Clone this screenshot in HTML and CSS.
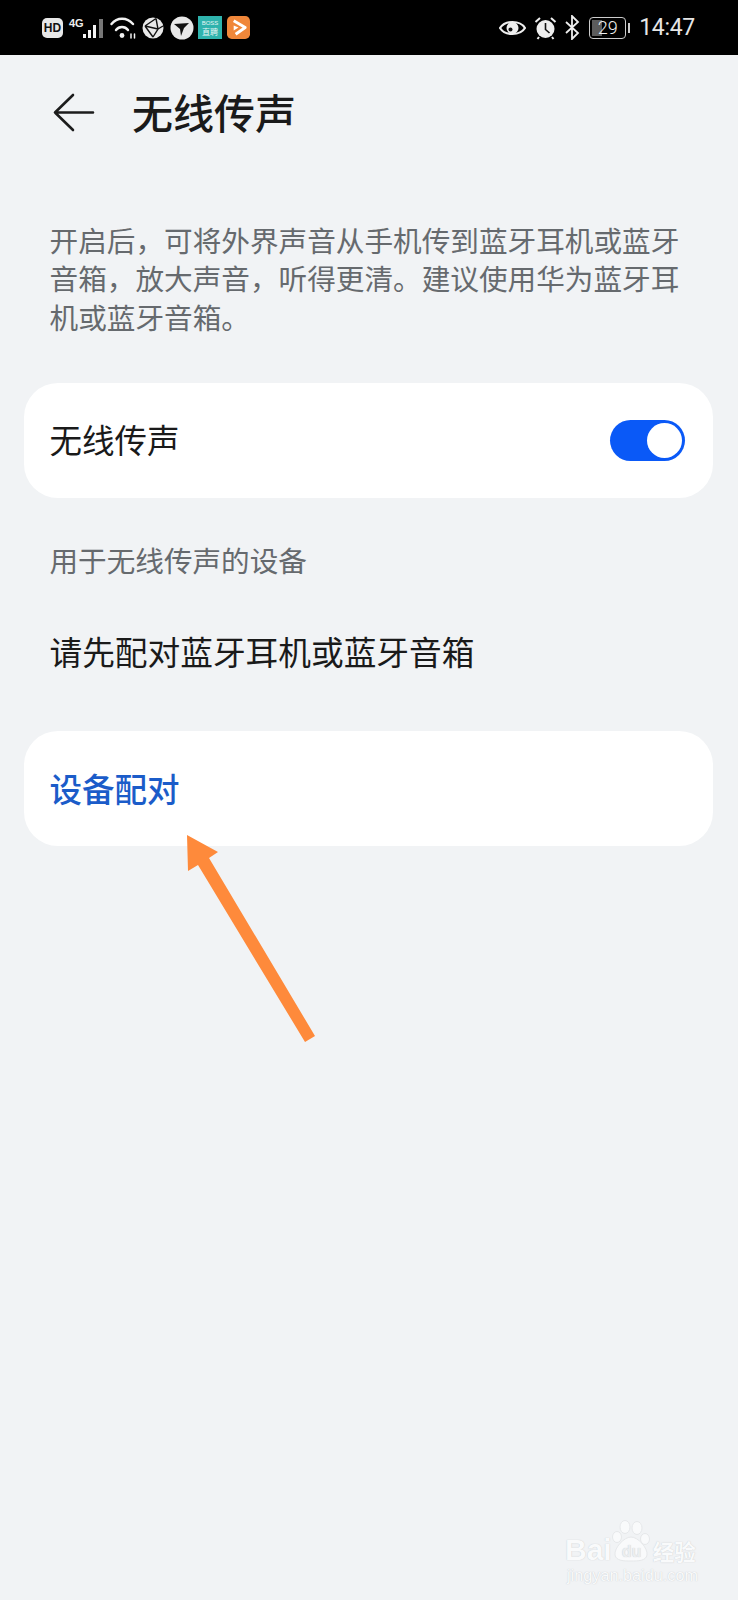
FILE: index.html
```html
<!DOCTYPE html>
<html lang="zh">
<head>
<meta charset="utf-8">
<title>无线传声</title>
<link rel="stylesheet" href="styles.css">
</head>
<body>
<div class="screen">
  <header class="status">
    <div class="status-left">
      <span class="hd">HD</span>
      <span class="signal">
        <span class="net">4G</span>
        <svg width="22" height="24" viewBox="0 0 22 24"><g fill="#f2f2f2"><rect x="1" y="18" width="3" height="4"/><rect x="6" y="14" width="3" height="8"/><rect x="11" y="9" width="3" height="13"/></g><rect x="17" y="3" width="4" height="19" fill="#777"/></svg>
      </span>
      <svg class="wifi" width="26" height="24" viewBox="0 0 26 24" fill="none" stroke="#f2f2f2" stroke-width="2.400" stroke-linecap="round"><path d="M1.500 8C7 1 17 1 23 8"/><path d="M6 14C9 10 15 10 18 14"/><circle cx="12" cy="19.500" r="2.400" fill="#f2f2f2" stroke="none"/><path d="M21 18v4M24.500 18v4" stroke-width="1.500"/></svg>
      <svg width="22" height="22" viewBox="0 0 22 22"><circle cx="11" cy="11" r="10.500" fill="#e8e8e8"/><path d="M3 9L14 1.500M3 9l8 11M14 1.500L16 12 11 20M16 12L3 9M16 12l5-3" stroke="#111" stroke-width="1.400" fill="none"/></svg>
      <svg width="24" height="24" viewBox="0 0 24 24"><circle cx="12" cy="12" r="11.500" fill="#e8e8e8"/><path d="M4 8l15-1-5 5-3 8-1-7z" fill="#111"/></svg>
      <span class="boss"><span>BOSS</span><span class="boss-b">直聘</span></span>
      <svg class="app-orange" width="23" height="23" viewBox="0 0 24 24"><rect width="24" height="24" rx="5" fill="#f0873a"/><path d="M7 5l12 7-10 7" fill="none" stroke="#fff" stroke-width="3" stroke-linejoin="round"/><path d="M7 10l5 2-5 3z" fill="#fff"/></svg>
    </div>
    <div class="status-right">
      <svg width="27" height="20" viewBox="0 0 27 20"><path d="M1 10C6 2 21 2 26 10 21 18 6 18 1 10Z" fill="none" stroke="#eee" stroke-width="2.200"/><circle cx="13.500" cy="10" r="6" fill="#eee"/><circle cx="11.500" cy="11.500" r="2" fill="#111"/></svg>
      <svg width="23" height="24" viewBox="0 0 23 24"><circle cx="11.500" cy="13" r="9" fill="#eee"/><path d="M11.500 7v6.500l4 3.500" stroke="#111" stroke-width="1.600" fill="none"/><path d="M1.500 6L6 2M21.500 6L17 2M5 21l-1.500 2M18 21l1.500 2" stroke="#eee" stroke-width="2" fill="none"/></svg>
      <svg width="15" height="25" viewBox="0 0 15 25" fill="none" stroke="#eee" stroke-width="1.800"><path d="M1 7l12 11-6 6V1l6 6L1 18"/></svg>
      <span class="battery-wrap">
        <span class="battery"><span class="battery-fill"></span><span class="battery-num">29</span></span>
        <span class="battery-cap"></span>
      </span>
      <span class="time">14:47</span>
    </div>
  </header>

  <div class="titlebar">
    <svg class="back" width="42" height="40" viewBox="0 0 42 40" fill="none" stroke="#1c1c1c" stroke-width="2.600" stroke-linecap="round" stroke-linejoin="round"><path d="M20 2L2 19.500 20 37M2 19.500h38"/></svg>
    <h1 class="title">无线传声</h1>
  </div>

  <p class="desc">开启后，可将外界声音从手机传到蓝牙耳机或蓝牙音箱，放大声音，听得更清。建议使用华为蓝牙耳机或蓝牙音箱。</p>

  <section class="card card-toggle">
    <span class="row-label">无线传声</span>
    <span class="switch"><span class="knob"></span></span>
  </section>

  <h2 class="section-label">用于无线传声的设备</h2>
  <p class="hint">请先配对蓝牙耳机或蓝牙音箱</p>

  <section class="card card-pair">
    <span class="row-link">设备配对</span>
  </section>

  <svg class="arrow" width="738" height="1600" viewBox="0 0 738 1600"><polygon points="187,835 218,852 209,858 315,1036 305,1042 198,865 188,871" fill="#fe8a3b"/></svg>

  <div class="watermark">
    <div class="wm-top">
      <span class="wm-bai">Bai</span>
      <span class="wm-paw">
        <svg class="wm-paw-icon" width="38" height="42" viewBox="0 0 38 42"><g fill="#f9fafb" stroke="#e6e8ea" stroke-width="1"><ellipse cx="13" cy="7" rx="5" ry="6.500"/><ellipse cx="25" cy="8" rx="5" ry="6.500"/><ellipse cx="5" cy="17" rx="4.500" ry="5.500"/><ellipse cx="33" cy="19" rx="4.500" ry="5.500"/><path d="M19 17c7 0 17 11 16 18-1 6-9 6-16 6S4 41 3 35c-1-7 9-18 16-18Z"/></g></svg>
        <span class="wm-du">du</span>
      </span>
      <span class="wm-cn">经验</span>
    </div>
    <div class="wm-url">jingyan.baidu.com</div>
  </div>
</div>
</body>
</html>
```

FILE: styles.css
```css
* { box-sizing: border-box; }
html, body { margin: 0; padding: 0; }
body {
  background: #f1f3f5;
  font-family: "Noto Sans CJK SC", "Noto Sans", sans-serif;
}
.screen {
  position: relative;
  width: 738px;
  height: 1600px;
  overflow: hidden;
  background: #f1f3f5;
}
.status {
  height: 55px;
  background: #000;
  display: flex;
  align-items: center;
  justify-content: space-between;
  padding: 0 43px 0 42px;
}
.status-left, .status-right { display: flex; align-items: center; }
.status-left { gap: 6px; }
.status-right { gap: 8px; }
.hd {
  width: 21px;
  height: 20px;
  border-radius: 5px;
  background: #e8e8e8;
  color: #111;
  font: 700 12px/20px "Liberation Sans", sans-serif;
  text-align: center;
}
.signal { display: flex; align-items: flex-start; }
.net {
  font: 700 11px/12px "Liberation Sans", sans-serif;
  color: #eee;
  width: 13px;
  margin-top: 1px;
}
.boss {
  width: 24px;
  height: 23px;
  margin-left: -2px;
  background: #2fb3ad;
  color: #e8f6f5;
  display: flex;
  flex-direction: column;
  align-items: center;
  justify-content: center;
  font: 6px/8px "Liberation Sans", sans-serif;
}
.boss-b { font: 8px/10px "Noto Sans CJK SC", sans-serif; }
.app-orange { margin-left: -1px; }
.battery-wrap { display: flex; align-items: center; gap: 2px; margin-left: 1px; }
.battery {
  position: relative;
  width: 37px;
  height: 22px;
  border: 1.500px solid #ccc;
  border-radius: 4px;
}
.battery-fill {
  position: absolute;
  left: 2px;
  top: 2px;
  bottom: 2px;
  width: 10px;
  background: #5c5c5c;
}
.battery-num {
  position: absolute;
  inset: 0;
  color: #eee;
  font: 300 18px/19px "Roboto", sans-serif;
  text-align: center;
}
.battery-cap { width: 2px; height: 10px; background: #ccc; }
.time {
  color: #e6e6e6;
  font: 23px/26px "Roboto", sans-serif;
  letter-spacing: -0.300px;
  margin-left: 1px;
}
.titlebar {
  height: 115px;
  display: flex;
  align-items: center;
  padding-left: 53px;
}
.back { flex: none; }
.title {
  margin: 0 0 3px 37px;
  font-size: 41px;
  line-height: 56px;
  font-weight: 500;
  color: #1a1a1a;
}
.desc {
  margin: 51px 50px 0 49.500px;
  font-size: 28.640px;
  line-height: 38.400px;
  color: #666a6e;
}
.card {
  background: #fff;
  border-radius: 34px;
  margin: 0 25px 0 24px;
  height: 115px;
  display: flex;
  align-items: center;
  padding: 0 28px 0 25.500px;
}
.card-toggle {
  margin-top: 46.300px;
  justify-content: space-between;
}
.row-label, .row-link { margin-bottom: 2px; }
.row-label {
  font-size: 32.500px;
  line-height: 44px;
  color: #1a1a1a;
}
.switch {
  width: 75px;
  height: 41px;
  background: #0a59f7;
  border-radius: 21px;
  display: flex;
  align-items: center;
  justify-content: flex-end;
  padding-right: 3px;
}
.knob {
  width: 35px;
  height: 35px;
  border-radius: 50%;
  background: #fff;
}
.section-label {
  margin: 42px 0 0 49.500px;
  font-size: 28.600px;
  line-height: 40px;
  font-weight: 400;
  color: #666a6e;
}
.hint {
  margin: 48px 0 0 49.500px;
  font-size: 32.700px;
  line-height: 46px;
  color: #1a1a1a;
}
.card-pair { margin-top: 57.500px; }
.row-link {
  font-size: 32.500px;
  line-height: 44px;
  font-weight: 500;
  color: #1b5cc9;
}
.arrow {
  position: absolute;
  left: 0;
  top: 0;
  pointer-events: none;
}
.watermark {
  position: absolute;
  left: 565px;
  top: 1520px;
  color: #f9fafb;
  text-shadow: 0 0 1px rgba(150, 155, 160, 0.55);
}
.wm-top { display: flex; align-items: flex-end; }
.wm-bai { font: 700 30px/34px "Liberation Sans", sans-serif; }
.wm-paw { position: relative; display: block; width: 38px; height: 42px; margin-bottom: 4.600px; }
.wm-paw-icon { display: block; }
.wm-du {
  position: absolute;
  left: 10px;
  top: 23px;
  color: #eceef0;
  font: 700 16px/18px "Liberation Sans", sans-serif;
}
.wm-cn { font: 700 21.500px/30px "Noto Sans CJK SC", sans-serif; margin: 0 0 0.600px 3px; }
.wm-url {
  font: 16.250px/20px "Liberation Sans", sans-serif;
  margin-top: -1.600px;
  padding-left: 2px;
}
```
